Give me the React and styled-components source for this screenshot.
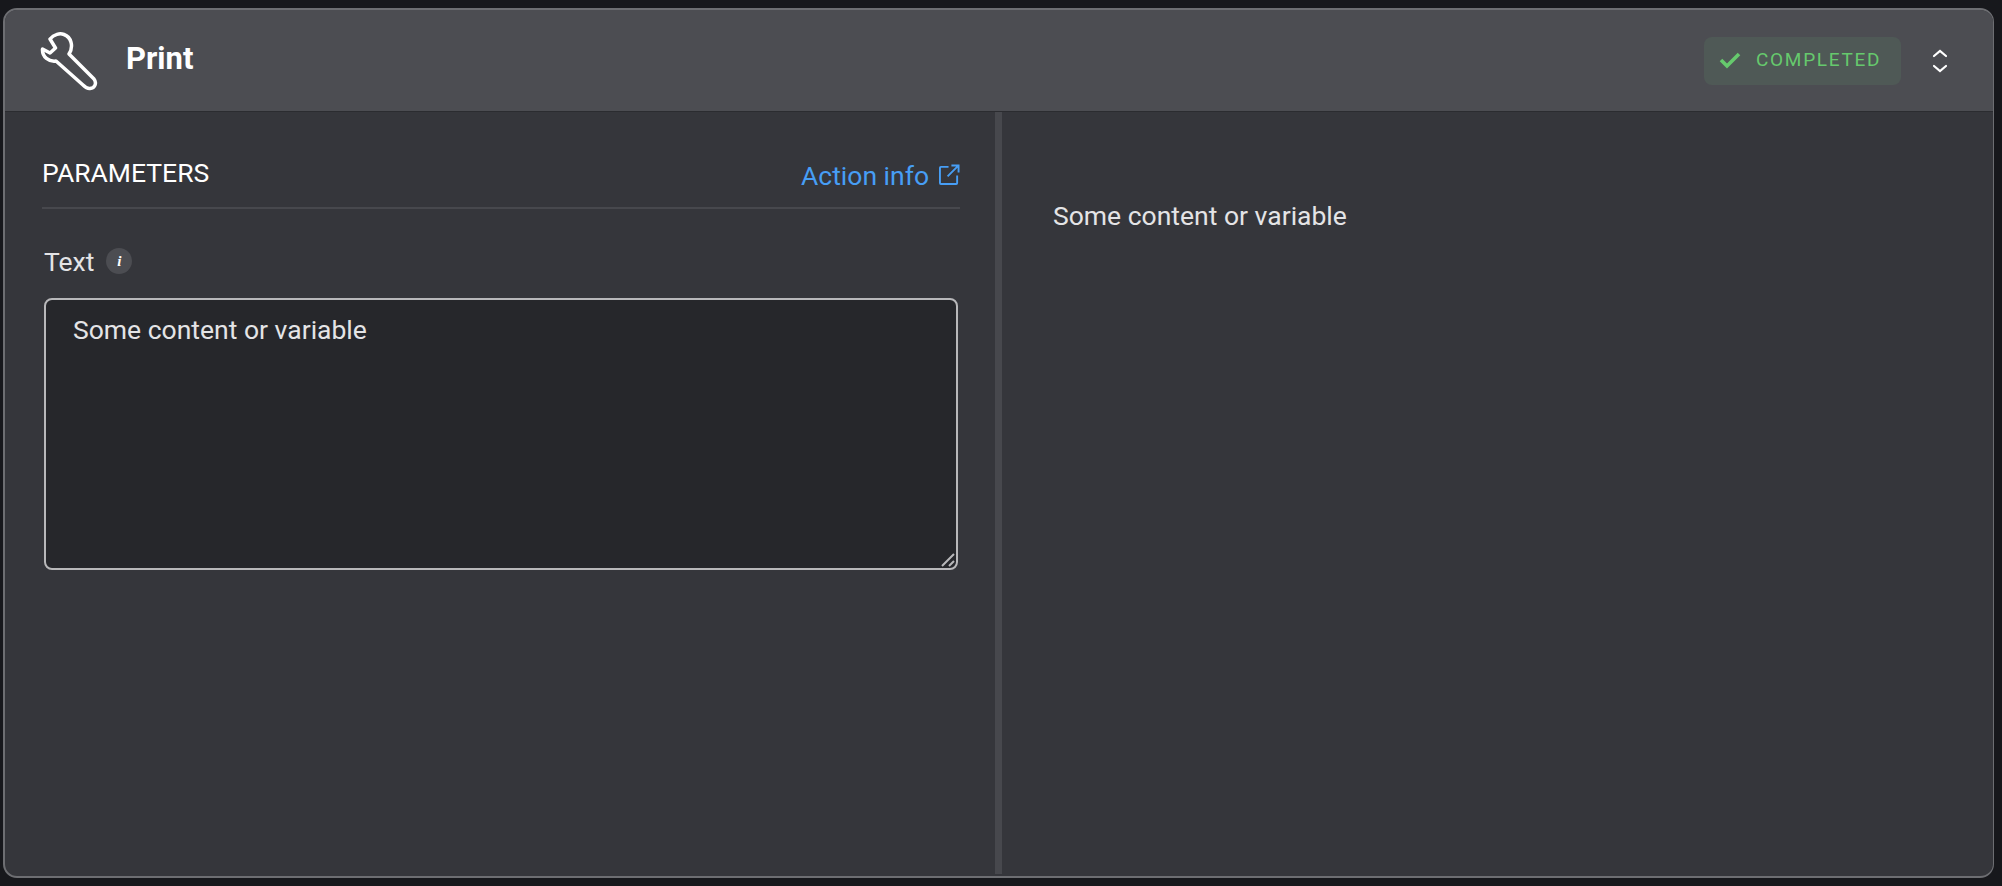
import React from 'react';
import styled, { createGlobalStyle } from 'styled-components';

const Global = createGlobalStyle`
  html, body { margin: 0; padding: 0; background: #17181c; }
  body { font-family: Roboto, "Liberation Sans", sans-serif; }
`;

const Page = styled.div`
  box-sizing: border-box;
  width: 2002px;
  height: 886px;
  padding: 8px 8px 8px 3px;
  background: #17181c;
`;

const Card = styled.section`
  box-sizing: border-box;
  height: 100%;
  display: flex;
  flex-direction: column;
  border: 2px solid #6d6e72;
  border-right-width: 1px;
  border-radius: 14px;
  overflow: hidden;
  background: #35363b;
`;

const Header = styled.header`
  flex: none;
  box-sizing: border-box;
  height: 102px;
  display: flex;
  align-items: center;
  padding: 0 45px 0 35px;
  background: #4c4d52;
  border-bottom: 1px solid #2b2c30;
`;

const Title = styled.h1`
  margin: 0 0 5px 28px;
  flex: 1;
  font-size: 31px;
  font-weight: 700;
  color: #fff;
`;

const Status = styled.div`
  box-sizing: border-box;
  width: 197px;
  height: 48px;
  display: flex;
  align-items: center;
  gap: 15px;
  padding: 0 0 2px 15px;
  border-radius: 8px;
  background: #4f5956;
  color: #66c96d;
  font-size: 19px;
  letter-spacing: 1.7px;
`;

const Expand = styled.button`
  margin-left: 31px;
  padding: 0;
  display: flex;
  border: 0;
  background: none;
`;

const Body = styled.div`
  flex: 1;
  display: flex;
  min-height: 0;
`;

const LeftPane = styled.div`
  flex: none;
  box-sizing: border-box;
  width: 990px;
  padding: 44px 35px 0 37px;
`;

const Splitter = styled.div`
  flex: none;
  width: 7px;
  margin-bottom: 2px;
  background: #47484d;
`;

const RightPane = styled.div`
  flex: 1;
  padding: 88px 0 0 51px;
  color: #e4e4e6;
  font-size: 26.5px;
  line-height: 32px;
`;

const SectionHead = styled.div`
  height: 51px;
  display: flex;
  justify-content: space-between;
  border-bottom: 2px solid #47484d;
`;

const SectionTitle = styled.h2`
  margin: 1px 0 0;
  font-size: 26.500px;
  line-height: 32px;
  font-weight: 400;
  color: #fff;
`;

const InfoLink = styled.a`
  display: flex;
  gap: 10px;
  height: 32px;
  margin-top: 4px;
  font-size: 26.500px;
  line-height: 32px;
  color: #479ef5;
`;

const LinkIcon = styled.svg`
  margin-top: 4px;
`;

const Field = styled.div`
  padding: 0 2px;
`;

const Label = styled.label`
  display: flex;
  align-items: center;
  gap: 12px;
  margin: 36px 0 21px;
  height: 32px;
  font-size: 26.500px;
  color: #e4e4e6;
`;

const Hint = styled.span`
  width: 26px;
  height: 26px;
  display: flex;
  align-items: center;
  justify-content: center;
  border-radius: 50%;
  background: #4c4d52;
  color: #fff;
  font: italic 700 15px "Liberation Serif", serif;
`;

const AreaWrap = styled.div`
  position: relative;
  height: 272px;
`;

const Area = styled.textarea`
  box-sizing: border-box;
  display: block;
  width: 100%;
  height: 100%;
  padding: 14px 27px;
  border: 2px solid #b8b8ba;
  border-radius: 8px;
  outline: none;
  resize: none;
  background: #26272b;
  color: #e4e4e6;
  font: 400 26.500px/32px Roboto, "Liberation Sans", sans-serif;
`;

const Grip = styled.svg`
  position: absolute;
  right: 2px;
  bottom: 2px;
`;

export default function App() {
  return (
    <Page>
      <Global />
      <Card>
        <Header>
          <svg width="58" height="60" viewBox="0 0 58 60" fill="none" stroke="#fff" strokeWidth="3.500" strokeLinejoin="round" strokeLinecap="round">
            <path d="M10 8C14 3 20 2 24 3.500C31 6 34 15 29 23L54 48C57 52 55 57 50 57.500C47 58 45 56 43 54L16 30C9 31 2 26 2.500 18L10 22L15.500 17L10 8Z" />
          </svg>
          <Title>Print</Title>
          <Status>
            <svg width="22" height="18" viewBox="0 0 22 18" fill="none" stroke="#66c96d" strokeWidth="3.600">
              <path d="M2 9l6 6L20 3" />
            </svg>
            COMPLETED
          </Status>
          <Expand aria-label="Expand">
            <svg width="16" height="26" viewBox="0 0 16 26" fill="none" stroke="#fff" strokeWidth="2.200" strokeLinecap="round">
              <path d="M2 8l6-5 6 5M2 18l6 5 6-5" />
            </svg>
          </Expand>
        </Header>
        <Body>
          <LeftPane>
            <SectionHead>
              <SectionTitle>PARAMETERS</SectionTitle>
              <InfoLink>
                Action info
                <LinkIcon width="21" height="21" viewBox="0 0 22 22" fill="none" stroke="#479ef5" strokeWidth="2">
                  <path d="M10 3H2a1 1 0 0 0-1 1v16a1 1 0 0 0 1 1h16a1 1 0 0 0 1-1v-8M9 13L20 2M13 1.500h7.500V9" />
                </LinkIcon>
              </InfoLink>
            </SectionHead>
            <Field>
              <Label>
                Text
                <Hint>i</Hint>
              </Label>
              <AreaWrap>
                <Area defaultValue="Some content or variable" />
                <Grip width="16" height="16" viewBox="0 0 16 16" stroke="#b8b8ba" strokeWidth="2">
                  <path d="M2 14L14 2M9 14l5-5" />
                </Grip>
              </AreaWrap>
            </Field>
          </LeftPane>
          <Splitter />
          <RightPane>Some content or variable</RightPane>
        </Body>
      </Card>
    </Page>
  );
}
